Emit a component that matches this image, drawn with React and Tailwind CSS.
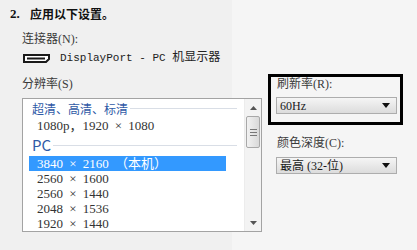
import React from "react";

const serif = "font-['Liberation_Serif','Noto_Sans_CJK_SC',serif]";

const resolutions = [
  { label: "3840 × 2160 （本机）", selected: true },
  { label: "2560 × 1600" },
  { label: "2560 × 1440" },
  { label: "2048 × 1536" },
  { label: "1920 × 1440" },
];

const GroupHeader = ({ title, className }) => (
  <div className="flex items-center pl-[9px] pr-[7px]">
    <span className={`text-[#2f5aa6] font-['Noto_Sans_CJK_SC',sans-serif] ${className}`}>
      {title}
    </span>
    <div className="ml-[2px] h-px flex-1 bg-[#d9dee6]" />
  </div>
);

const Dropdown = ({ value }) => (
  <div className="flex h-[17px] w-[121px] items-center justify-between border border-[#adadad] bg-[linear-gradient(#f5f5f5,#dcdcdc)] pl-[3px] pr-[6px]">
    <span className={`text-[12px] leading-none text-[#1a1a1a] ${serif}`}>{value}</span>
    <svg width="8" height="5" viewBox="0 0 8 5">
      <path d="M0 0h8L4 5z" fill="#111" />
    </svg>
  </div>
);

const DisplayPortIcon = () => (
  <svg width="27" height="9" viewBox="0 0 27 9">
    <path d="M1 1h25v4l-3 3H1z" fill="#fff" stroke="#1a1a1a" strokeWidth="2" />
    <rect x="4" y="3.5" width="18" height="2" fill="#1a1a1a" />
  </svg>
);

const Scrollbar = () => (
  <div className="flex w-[17px] flex-col border-l border-[#ececec] bg-[#f3f3f3]">
    <div className="flex h-[17px] items-center justify-center">
      <svg width="7" height="4" viewBox="0 0 7 4">
        <path d="M0 4L3.5 0 7 4z" fill="#555" />
      </svg>
    </div>
    <div className="mx-[1px] flex h-[32px] flex-col items-center justify-center gap-[2px] rounded-[2px] border border-[#a8a8a8] bg-[linear-gradient(to_right,#f2f2f2,#d9d9d9)]">
      <div className="h-px w-[7px] bg-[#777]" />
      <div className="h-px w-[7px] bg-[#777]" />
      <div className="h-px w-[7px] bg-[#777]" />
    </div>
    <div className="flex-1" />
    <div className="flex h-[17px] items-center justify-center">
      <svg width="7" height="4" viewBox="0 0 7 4">
        <path d="M0 0h7L3.5 4z" fill="#555" />
      </svg>
    </div>
  </div>
);

export default function App() {
  return (
    <div
      className={`h-[250px] w-[417px] overflow-hidden bg-[linear-gradient(to_right,#f0f0f0_232px,#f5f5f5_232px)] pl-[10px] pt-[6px] text-[#3a3a3a] ${serif}`}
    >
      {/* 标题 */}
      <div className="flex h-[16px] items-center text-[12px] font-bold text-[#111]">
        <span className="w-[20px] text-[13px]">2.</span>
        <span className="font-['Noto_Sans_CJK_SC',sans-serif]">应用以下设置。</span>
      </div>

      <div className="ml-[12px] mt-[10px] h-[14px] text-[12px] leading-[14px]">连接器(N):</div>

      <div className="ml-[13px] mt-[5px] flex h-[14px] items-center">
        <DisplayPortIcon />
        <span className="ml-[10px] whitespace-pre font-['Liberation_Mono','Noto_Sans_CJK_SC',monospace] text-[11px] text-[#222]">
          DisplayPort - PC <span className="text-[12px]">机显示器</span>
        </span>
      </div>

      <div className="mt-[9px] flex">
        {/* 分辨率 */}
        <div className="ml-[12px] w-[240px]">
          <div className="mt-[3px] h-[14px] text-[12px] leading-[14px]">分辨率(S)</div>
          <div className="mt-[7px] flex h-[134px] border border-[#a3a3a3] bg-white">
            <div className="flex flex-1 flex-col">
              <div className="flex h-[19px] flex-col justify-center">
                <GroupHeader title="超清、高清、标清" className="text-[12px] leading-[14px]" />
              </div>
              <div className="flex h-[16px] items-center pl-[14px] text-[13px] text-[#333] [word-spacing:3px]">
                1080p，1920 × 1080
              </div>
              <div className="flex h-[22px] flex-col justify-center">
                <GroupHeader title="PC" className="text-[15px] leading-[18px]" />
              </div>
              {resolutions.map((r) => (
                <div
                  key={r.label}
                  className={`ml-[6px] flex h-[15px] w-[197px] items-center pl-[8px] text-[13px] [word-spacing:3px] ${
                    r.selected ? "bg-[#3399ff] text-white" : "text-[#333]"
                  }`}
                >
                  {r.label}
                </div>
              ))}
            </div>
            <Scrollbar />
          </div>
        </div>

        {/* 刷新率 / 颜色深度 */}
        <div className="ml-[6px] flex flex-col">
          <div className="h-[51px] w-[135px] border-[3px] border-black pl-[5px]">
            <div className="h-[14px] pl-[1px] text-[12px] leading-[14px]">刷新率(R):</div>
            <div className="mt-[6px]">
              <Dropdown value="60Hz" />
            </div>
          </div>
          <div className="ml-[8px] mt-[11px] h-[14px] pl-[1px] text-[12px] leading-[14px]">颜色深度(C):</div>
          <div className="ml-[8px] mt-[7px]">
            <Dropdown value="最高 (32-位)" />
          </div>
        </div>
      </div>
    </div>
  );
}
